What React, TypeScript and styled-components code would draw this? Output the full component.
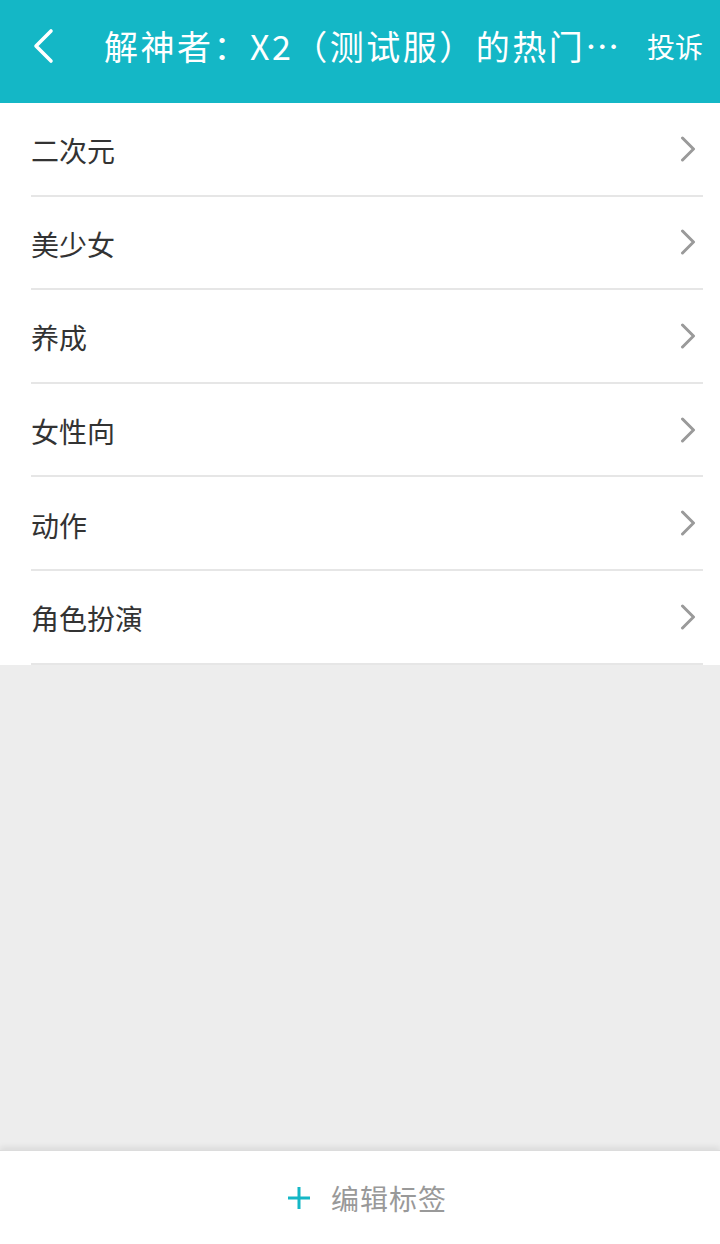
import React from 'react';
import styled, { createGlobalStyle } from 'styled-components';

const tags = ['二次元', '美少女', '养成', '女性向', '动作', '角色扮演'];

const GlobalStyle = createGlobalStyle`
    html, body {
        margin: 0;
        padding: 0;
        background: #ededed;
        font-family: "Noto Sans CJK SC", "Noto Sans", Roboto, sans-serif;
    }
`;

const App = () => {
    return (
        <Page>
            <GlobalStyle />
            <Header>
                <BackButton>
                    <svg width="24" height="36" viewBox="0 0 24 36">
                        <path d="M20 3 L5 18 L20 33" fill="none" stroke="#fff" strokeWidth="3.6" strokeLinecap="round" strokeLinejoin="round" />
                    </svg>
                </BackButton>
                <Title>解神者：X2（测试服）的热门标签</Title>
                <Report>投诉</Report>
            </Header>
            <List>
                {tags.map(t => (
                    <Row key={t}>
                        <RowLabel>{t}</RowLabel>
                        <svg width="16" height="26" viewBox="0 0 16 26">
                            <path d="M2.5 2 L13.5 13 L2.5 24" fill="none" stroke="#9a9a9a" strokeWidth="3" strokeLinecap="round" strokeLinejoin="round" />
                        </svg>
                    </Row>
                ))}
            </List>
            <Filler />
            <BottomBar>
                <EditButton>
                    <svg width="24" height="24" viewBox="0 0 24 24">
                        <path d="M12 1 V23 M1 12 H23" stroke="#14b7c6" strokeWidth="3" />
                    </svg>
                    <EditLabel>编辑标签</EditLabel>
                </EditButton>
            </BottomBar>
        </Page>
    );
}

const Page = styled.div`
    width: 720px;
    height: 1244px;
    display: flex;
    flex-direction: column;
    background: #ededed;
    overflow: hidden;
`;

const Header = styled.div`
    height: 103px;
    flex-shrink: 0;
    background-color: #14b7c6;
    display: flex;
    align-items: center;
    padding: 0 17px 0 0;
    box-sizing: border-box;
    color: #fff;
`;

const BackButton = styled.div`
    width: 104px;
    height: 103px;
    display: flex;
    align-items: center;
    padding-left: 31px;
    padding-bottom: 12px;
    box-sizing: border-box;
    flex-shrink: 0;
`;

const Title = styled.div`
    flex: 1;
    min-width: 0;
    font-size: 34px;
    letter-spacing: 2.5px;
    white-space: nowrap;
    overflow: hidden;
    text-overflow: ellipsis;
    padding-bottom: 12px;
    margin-right: 20px;
`;

const Report = styled.div`
    font-size: 28px;
    flex-shrink: 0;
    padding-bottom: 12px;
`;

const List = styled.div`
    background: #fff;
    display: flex;
    flex-direction: column;
    flex-shrink: 0;
`;

const Row = styled.div`
    height: 93.6px;
    margin: 0 17px 0 31px;
    border-bottom: 2px solid #e6e6e6;
    box-sizing: border-box;
    display: flex;
    align-items: center;
    justify-content: space-between;
    padding-right: 7px;
`;

const RowLabel = styled.div`
    font-size: 28px;
    color: #333;
    padding-top: 3px;
`;

const Filler = styled.div`
    flex: 1;
    background: #ededed;
`;

const BottomBar = styled.div`
    height: 94px;
    flex-shrink: 0;
    background: #fff;
    display: flex;
    align-items: center;
    justify-content: center;
    box-shadow: 0 -3px 6px rgba(0,0,0,0.08);
    border-top: 1px solid #dcdcdc;
    box-sizing: border-box;
`;

const EditButton = styled.div`
    display: flex;
    align-items: center;
    gap: 20px;
    margin-left: 14px;
`;

const EditLabel = styled.div`
    font-size: 28px;
    letter-spacing: 1px;
    color: #999;
`;

export default App;
